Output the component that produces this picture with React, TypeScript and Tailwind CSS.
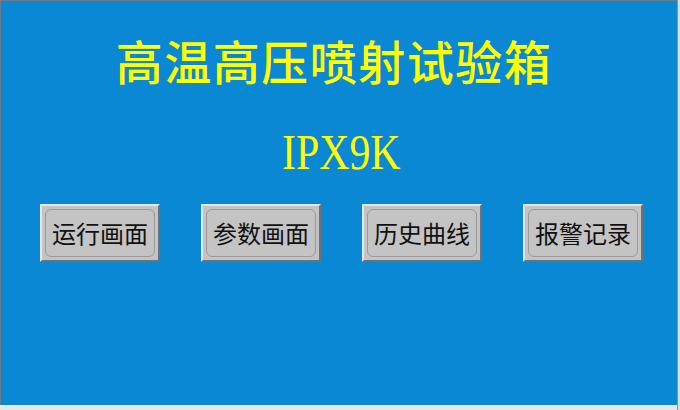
import React from "react";

const labels = ["运行画面", "参数画面", "历史曲线", "报警记录"];

export default function App() {
  return (
    <div className="w-[680px] h-[410px] bg-[#e8e8e8] flex flex-col overflow-hidden">
      <div className="flex flex-1">
        <div className="w-[677px] h-[405px] bg-[#0a88d4] border-l border-t border-[#6b7a88] flex flex-col items-center">
          <div
            className="mt-[34px] text-[47px] leading-[50px] font-medium text-[#ffff00] tracking-[1.5px] -translate-x-[5px]"
            style={{ fontFamily: '"Noto Sans CJK SC", sans-serif' }}
          >
            高温高压喷射试验箱
          </div>
          <div
            className="mt-[39px] text-[51px] leading-[56px] text-[#ffff00] scale-x-[0.82] translate-x-[2px]"
            style={{ fontFamily: '"Liberation Serif", serif' }}
          >
            IPX9K
          </div>
          <div className="mt-[24px] w-full pl-[39px] flex gap-[41px]">
            {labels.map((l) => (
              <div
                key={l}
                className="w-[120px] h-[58px] bg-[#c4c4c4] border-t-2 border-l-2 border-[#e6e6e6] border-b-2 border-r-2 border-b-[#707070] border-r-[#707070] p-[3px]"
              >
                <div className="w-full h-full rounded-[6px] border border-[#9a9a9a] flex items-center justify-center">
                  <span
                    className="text-[24px] text-[#111] leading-none"
                    style={{ fontFamily: '"Noto Sans CJK SC", sans-serif' }}
                  >
                    {l}
                  </span>
                </div>
              </div>
            ))}
          </div>
        </div>
        <div className="w-[3px] bg-[#dcdcdc] border-l border-[#5aa0d8]" />
      </div>
    </div>
  );
}
